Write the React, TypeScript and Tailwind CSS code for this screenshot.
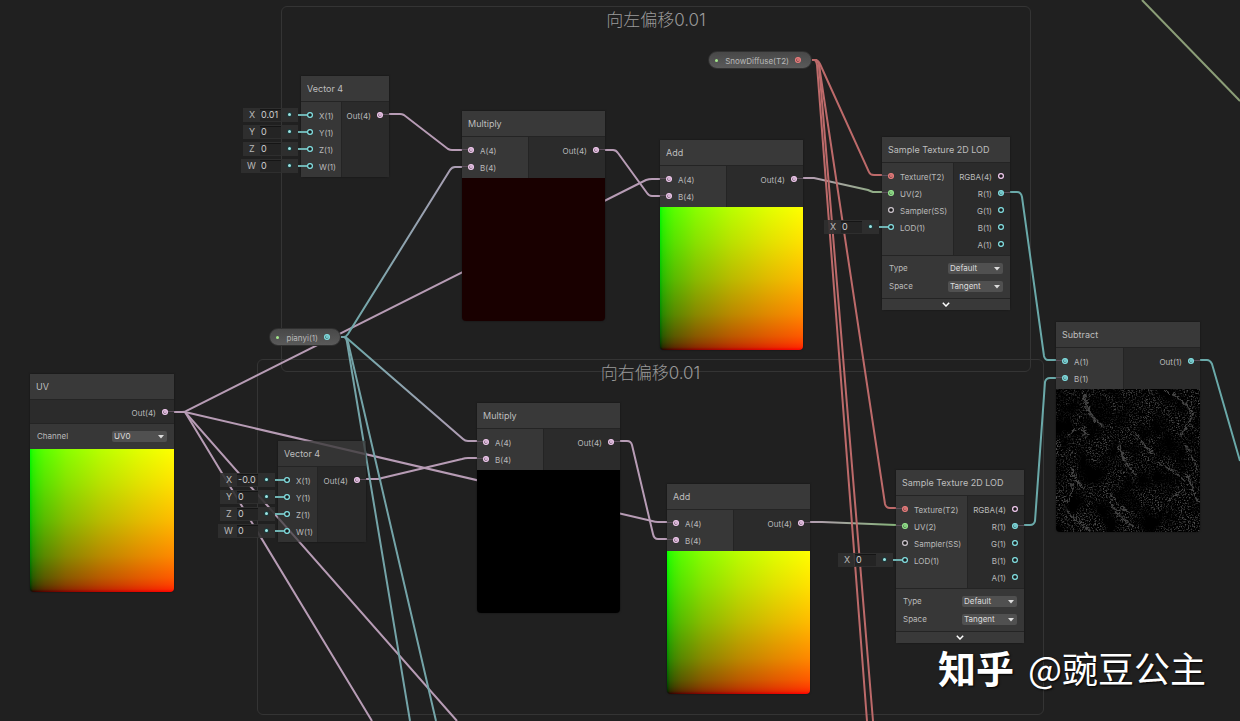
import type { ReactNode } from "react"

const PINK = "#b79cb5"
const TEAL = "#6aa9a9"
const RED = "#bd6a6a"
const GREEN = "#86b27a"

const PIN_COLORS = {
  pink: "#f6cdf3",
  teal: "#84e4e7",
  red: "#f08080",
  green: "#9aef92",
  gray: "#d0c8d0",
}

type PinColor = keyof typeof PIN_COLORS

type PortData = {
  label: string
  color: PinColor
  on?: boolean
  slot?: { axis: string; value: string; wide?: boolean }
}

function Pin({ color, on }: { color: PinColor; on?: boolean }) {
  return (
    <svg viewBox="0 0 8 8" className="size-2 shrink-0">
      <circle cx="4" cy="4" r="2.4" fill="#1b1b1b" stroke={PIN_COLORS[color]} strokeWidth="1.2" />
      {on && <circle cx="4.2" cy="3.8" r="1.8" fill={PIN_COLORS[color]} fillOpacity="0.85" />}
    </svg>
  )
}

/* Inline value box hanging off the left side of an input port */
function Slot({ id, axis, value, wide }: { id: string; axis: string; value: string; wide?: boolean }) {
  return (
    <div className="absolute right-full mr-[3px] flex h-[14px] items-center bg-[#303030]/90">
      <label htmlFor={id} className={wide ? "w-[19px] pl-[6px] text-[9px]" : "w-[17px] pl-[6px] text-[9px]"}>
        {axis}
      </label>
      <input
        id={id}
        defaultValue={value}
        className="h-3 w-[21px] border-t border-[#151515] bg-[#242424] pl-px text-[9px] text-[#cecece] outline-none"
      />
      <span className="mr-[7px] ml-[7px] size-[3px] rounded-full bg-[#9be6e6] ring-1 ring-[#1d3b3c]" />
      <span className="absolute left-full h-[2px] w-[9px] bg-[#6fb3b3]" />
    </div>
  )
}

function InputPort({ port, id }: { port: PortData; id: string }) {
  return (
    <li className="relative flex h-[17px] items-center gap-[5px] pl-[5px]">
      {port.slot && <Slot id={id} {...port.slot} />}
      {port.on && <span className="absolute left-0 h-px w-[6px] bg-[#5b4d5a]" />}
      <Pin color={port.color} on={port.on} />
      <span className="pt-[2px]">{port.label}</span>
    </li>
  )
}

function OutputPort({ port }: { port: PortData }) {
  return (
    <li className="relative flex h-[17px] items-center justify-end gap-[5px] pr-[5px]">
      <span className="pt-[2px]">{port.label}</span>
      <Pin color={port.color} on={port.on} />
      {port.on && <span className="absolute right-0 h-px w-[6px] bg-[#5b4d5a]" />}
    </li>
  )
}

function Ports({
  id,
  inputs,
  outputs,
  split,
  faded,
}: {
  id: string
  inputs: PortData[]
  outputs: PortData[]
  split: string
  faded?: boolean
}) {
  return (
    <div className="flex">
      <ul className={`${split} pt-1 pb-[3px] ${faded ? "bg-[#3a3a3a]/70" : "bg-[#373737]"}`}>
        {inputs.map((p) => (
          <InputPort key={p.label} port={p} id={`${id}-${p.label}`} />
        ))}
      </ul>
      <ul className={`flex-1 border-l border-[#242424] pt-1 pb-[3px] ${faded ? "bg-[#2b2b2b]/80" : "bg-[#2b2b2b]"}`}>
        {outputs.map((p) => (
          <OutputPort key={p.label} port={p} />
        ))}
      </ul>
    </div>
  )
}

function Node({
  title,
  className,
  faded,
  children,
}: {
  title: string
  className: string
  faded?: boolean
  children: ReactNode
}) {
  return (
    <article className={`absolute rounded-b shadow-[0_0_2px_rgba(0,0,0,0.5)] ${className}`}>
      <h3
        className={`flex h-[26px] items-center border-b border-[#242424] pl-[6px] text-[9px] text-[#bebebe] ${
          faded ? "bg-[#3a3a3a]/80" : "bg-[#393939]"
        }`}
      >
        {title}
      </h3>
      {children}
    </article>
  )
}

function Dropdown({ id, label, options }: { id: string; label: string; options: string[] }) {
  return (
    <div className="flex h-[18px] items-center justify-between pr-[7px] pl-[7px]">
      <label htmlFor={id}>{label}</label>
      <span className="relative flex">
        <select
          id={id}
          className="h-[11px] w-[55px] appearance-none rounded-xs bg-[#505050] pl-[2px] text-[8px] leading-[11px] text-[#dcdcdc] outline-none"
        >
          {options.map((o) => (
            <option key={o}>{o}</option>
          ))}
        </select>
        <svg viewBox="0 0 6 4" className="pointer-events-none absolute top-1 right-[3px] h-[4px] w-[6px]">
          <path d="M0 0H6L3 3.6Z" fill="#dcdcdc" />
        </svg>
      </span>
    </div>
  )
}

/* Red grows to the right and green grows upwards, both gamma corrected */
function UvPreview() {
  return (
    <div className="h-[143px] rounded-b bg-[linear-gradient(to_right,#000,#2b0000_2%,#410000_5%,#5a0000_10%,#880000_25%,#ba0000_50%,#e00000_75%,#f00_100%),linear-gradient(to_top,#000,#002b00_2%,#004100_5%,#005a00_10%,#008800_25%,#00ba00_50%,#00e000_75%,#0f0_100%)] bg-blend-screen" />
  )
}

function EdgePreview() {
  return (
    <svg viewBox="0 0 143 143" preserveAspectRatio="none" className="block h-[143px] w-full rounded-b bg-black">
      <defs>
        <filter id="grain" x="0" y="0" width="100%" height="100%" colorInterpolationFilters="sRGB">
          <feTurbulence type="fractalNoise" baseFrequency="0.7" numOctaves="2" seed="8" result="fine" />
          <feColorMatrix
            in="fine"
            values="0 0 0 0 0.3  0 0 0 0 0.3  0 0 0 0 0.3  4 0 0 0 -1.95"
            result="dots"
          />
          <feTurbulence type="fractalNoise" baseFrequency="0.05 0.04" numOctaves="4" seed="21" />
          <feColorMatrix values="0 0 0 0 1  0 0 0 0 1  0 0 0 0 1  0 3 0 0 -0.9" result="mask" />
          <feComposite in="dots" in2="mask" operator="in" />
        </filter>
        <filter id="rough" x="-10%" y="-10%" width="120%" height="120%">
          <feTurbulence type="fractalNoise" baseFrequency="0.35" numOctaves="2" seed="3" />
          <feDisplacementMap in="SourceGraphic" scale="7" xChannelSelector="R" yChannelSelector="G" />
        </filter>
      </defs>
      <rect width="143" height="143" filter="url(#grain)" />
      <g fill="#000" fillOpacity="0.7">
        <ellipse cx="44" cy="20" rx="10" ry="16" transform="rotate(-30 44 20)" />
        <ellipse cx="30" cy="86" rx="11" ry="9" />
        <ellipse cx="72" cy="112" rx="14" ry="8" transform="rotate(30 72 112)" />
        <ellipse cx="108" cy="58" rx="12" ry="9" />
      </g>
      <g filter="url(#rough)" fill="none" stroke="#4c4c4c" strokeWidth="1.5" opacity="0.9">
        <path d="M27 2C27 15 33 26 39 34M29 8C32 20 38 32 47 38" />
        <path d="M27 36L30 50M63 56C62 66 70 76 80 86M64 60L68 70" />
        <path d="M15 78C18 88 22 94 28 100M16 94C17 104 14 108 10 114" />
        <path d="M54 104C58 114 66 120 74 124M53 112C60 126 68 132 78 138" />
        <path d="M10 120C16 130 26 134 34 142M108 2C120 6 130 14 136 24" />
        <path d="M136 24C134 34 128 36 124 48M78 44C86 52 88 60 96 64" />
        <path d="M128 56C132 64 138 70 140 82M100 74C112 78 120 84 128 92" />
        <path d="M12 48C18 38 26 38 32 46M112 112L126 100M128 84C136 94 136 104 141 114" />
      </g>
    </svg>
  )
}

function Pill({ label, color, className }: { label: string; color: PinColor; className: string }) {
  return (
    <div
      className={`absolute flex h-[18px] items-center rounded-full border border-[#303030] bg-linear-to-b from-[#484848] to-[#5a5a5a] pr-[9px] pl-[6px] ${className}`}
    >
      <span className="size-[3px] rounded-full bg-[#a4e88c]" />
      <span className="flex-1 pt-px pr-[5px] text-right">{label}</span>
      <Pin color={color} on />
    </div>
  )
}

function Group({ title, className }: { title: string; className: string }) {
  return (
    <section className={`absolute rounded-md border border-[#343434] ${className}`}>
      <h2 className="text-center text-[17px] leading-[26px] font-light text-[#9a9a9a]">{title}</h2>
    </section>
  )
}

const xyzw = (x: string): PortData[] => [
  { label: "X(1)", color: "teal", slot: { axis: "X", value: x } },
  { label: "Y(1)", color: "teal", slot: { axis: "Y", value: "0" } },
  { label: "Z(1)", color: "teal", slot: { axis: "Z", value: "0" } },
  { label: "W(1)", color: "teal", slot: { axis: "W", value: "0", wide: true } },
]

const ab4: PortData[] = [
  { label: "A(4)", color: "pink", on: true },
  { label: "B(4)", color: "pink", on: true },
]

const ab1: PortData[] = [
  { label: "A(1)", color: "teal", on: true },
  { label: "B(1)", color: "teal", on: true },
]

const out4: PortData[] = [{ label: "Out(4)", color: "pink", on: true }]

const sampleIn: PortData[] = [
  { label: "Texture(T2)", color: "red", on: true },
  { label: "UV(2)", color: "green", on: true },
  { label: "Sampler(SS)", color: "gray" },
  { label: "LOD(1)", color: "teal", slot: { axis: "X", value: "0" } },
]

const sampleOut: PortData[] = [
  { label: "RGBA(4)", color: "pink" },
  { label: "R(1)", color: "teal", on: true },
  { label: "G(1)", color: "teal" },
  { label: "B(1)", color: "teal" },
  { label: "A(1)", color: "teal" },
]

function MathNode({ id, title, className, children }: { id: string; title: string; className: string; children: ReactNode }) {
  return (
    <Node title={title} className={`w-[143px] ${className}`}>
      <Ports id={id} inputs={ab4} outputs={out4} split="w-[66px]" />
      {children}
    </Node>
  )
}

function SampleNode({ id, className }: { id: string; className: string }) {
  return (
    <Node title="Sample Texture 2D LOD" className={`w-[128px] ${className}`}>
      <Ports id={id} inputs={sampleIn} outputs={sampleOut} split="w-[71px]" />
      <div className="border-t border-[#242424] bg-[#373737] pt-[3px] pb-[3px]">
        <Dropdown id={`${id}-type`} label="Type" options={["Default", "Normal"]} />
        <Dropdown id={`${id}-space`} label="Space" options={["Tangent", "Object"]} />
      </div>
      <button
        type="button"
        aria-label="Collapse"
        className="flex h-3 w-full items-center justify-center border-t border-[#242424] bg-[#393939]"
      >
        <svg viewBox="0 0 8 5" className="h-[5px] w-2">
          <path d="M0.8 0.8L4 4L7.2 0.8" fill="none" stroke="#fff" strokeWidth="1.5" />
        </svg>
      </button>
    </Node>
  )
}

const wires: { d: string; color: string }[] = [
  // UV output
  { d: "M173 412H182Q185 412 188 410L646 180Q649 179 652 179H660", color: PINK },
  { d: "M173 412H185L652 521Q655 522 658 522H667", color: PINK },
  { d: "M173 412H185L457 721", color: PINK },
  { d: "M173 412H185L372 721", color: PINK },
  // vectors and maths
  { d: "M389 114H400Q402 114 404 115L448 149Q450 150 452 150H462", color: PINK },
  { d: "M605 150H613Q616 150 618 153L647 193Q649 196 652 196H660", color: PINK },
  { d: "M366 479H378Q380 479 382 478L462 459Q465 458 468 458H477", color: PINK },
  { d: "M620 441H627Q631 441 632 445L653 534Q654 539 658 539H667", color: PINK },
  // pianyi output
  { d: "M341 337H344Q346 337 348 334L450 170Q452 167 455 167H462", color: "url(#teal-pink)" },
  { d: "M341 337H344Q346 337 349 340L463 439Q465 441 468 441H477", color: "url(#teal-pink)" },
  { d: "M341 337H344Q346 337 347 342L410 721", color: "#74a4a8" },
  { d: "M341 337H344Q346 337 348 342L436 721", color: "#74a4a8" },
  // uv into the samplers
  { d: "M803 178H814L868 190Q870 191 873 192H882", color: "url(#pink-green)" },
  { d: "M810 522H822L896 525", color: "url(#pink-green)" },
  // SnowDiffuse output
  { d: "M812 60H815Q818 60 820 64L869 172Q870 175 874 175H882", color: RED },
  { d: "M812 60H815Q818 60 819 65L885 504Q886 508 890 508H896", color: RED },
  { d: "M812 60H814Q816 60 817 65L867 721", color: RED },
  { d: "M812 60H815Q818 60 819 65L873 721", color: RED },
  // into and out of Subtract
  { d: "M1010 192H1017Q1021 192 1022 197L1044 356Q1045 360 1048 360H1056", color: TEAL },
  { d: "M1024 525H1030Q1034 525 1035 521L1045 382Q1046 378 1050 378H1056", color: TEAL },
  { d: "M1200 360H1207Q1210 360 1212 364L1240 461", color: TEAL },
  { d: "M1142 0L1240 101", color: "#8b9e77" },
]

function Wires() {
  return (
    <svg className="pointer-events-none absolute inset-0 h-full w-full" fill="none" strokeWidth="2">
      <defs>
        <linearGradient id="teal-pink" gradientUnits="userSpaceOnUse" x1="341" y1="0" x2="477" y2="0">
          <stop stopColor={TEAL} />
          <stop offset="1" stopColor={PINK} />
        </linearGradient>
        <linearGradient id="pink-green" gradientUnits="userSpaceOnUse" x1="803" y1="0" x2="896" y2="0">
          <stop stopColor={PINK} />
          <stop offset="1" stopColor={GREEN} />
        </linearGradient>
      </defs>
      {wires.map((w) => (
        <path key={w.d} d={w.d} stroke={w.color} />
      ))}
    </svg>
  )
}

export default function App() {
  return (
    <main className="relative min-h-screen overflow-hidden bg-[#202020] font-['Inter','Noto_Sans_CJK_SC',sans-serif] text-[8px] leading-3 text-[#bababa]">
      {/* GROUPS */}
      <Group title="向左偏移0.01" className="top-[6px] left-[281px] h-[366px] w-[750px]" />
      <Group title="向右偏移0.01" className="top-[359px] left-[257px] h-[356px] w-[787px]" />

      <Wires />

      {/* PROPERTIES */}
      <Pill label="SnowDiffuse(T2)" color="red" className="top-[51px] left-[708px] w-[104px]" />
      <Pill label="pianyi(1)" color="teal" className="top-[328px] left-[269px] w-[72px]" />

      {/* UV */}
      <Node title="UV" className="top-[374px] left-[30px] w-[144px]">
        <ul className="bg-[#2b2b2b] pt-[3px] pb-[3px]">
          <OutputPort port={out4[0]} />
        </ul>
        <div className="border-t border-[#242424] bg-[#373737] pt-[3px] pb-1">
          <Dropdown id="uv-channel" label="Channel" options={["UV0", "UV1", "UV2", "UV3"]} />
        </div>
        <UvPreview />
      </Node>

      {/* LEFT OFFSET */}
      <Node title="Vector 4" className="top-[76px] left-[301px] w-[88px]">
        <Ports id="left-vector" inputs={xyzw("0.01")} outputs={out4} split="w-[40px]" />
      </Node>
      <MathNode id="left-multiply" title="Multiply" className="top-[111px] left-[462px]">
        <div className="h-[143px] rounded-b bg-[#190000]" />
      </MathNode>
      <MathNode id="left-add" title="Add" className="top-[140px] left-[660px]">
        <UvPreview />
      </MathNode>
      <SampleNode id="left-sample" className="top-[137px] left-[882px]" />

      {/* RIGHT OFFSET */}
      <Node title="Vector 4" faded className="top-[441px] left-[278px] w-[88px]">
        <Ports id="right-vector" inputs={xyzw("-0.0")} outputs={out4} split="w-[39px]" faded />
      </Node>
      <MathNode id="right-multiply" title="Multiply" className="top-[403px] left-[477px]">
        <div className="h-[143px] rounded-b bg-black" />
      </MathNode>
      <MathNode id="right-add" title="Add" className="top-[484px] left-[667px]">
        <UvPreview />
      </MathNode>
      <SampleNode id="right-sample" className="top-[470px] left-[896px]" />

      {/* SUBTRACT */}
      <Node title="Subtract" className="top-[322px] left-[1056px] w-[144px]">
        <Ports
          id="subtract"
          inputs={ab1}
          outputs={[{ label: "Out(1)", color: "teal", on: true }]}
          split="w-[67px]"
        />
        <EdgePreview />
      </Node>

      {/* WATERMARK */}
      <p className="absolute right-[34px] bottom-[28px] flex items-center gap-[14px] font-['Noto_Sans_CJK_SC',sans-serif] text-[36px] leading-[52px] text-white [text-shadow:1px_1px_2px_#000]">
        <span className="text-[38px] font-bold">知乎</span>
        <span>@豌豆公主</span>
      </p>
    </main>
  )
}
